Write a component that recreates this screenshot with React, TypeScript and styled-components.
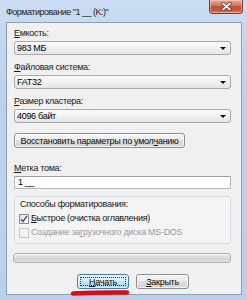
import React from "react";
import styled, { createGlobalStyle } from "styled-components";

const GlobalStyle = createGlobalStyle`
  html, body {
    margin: 0;
    padding: 0;
    background: #ffffff;
  }
  body {
    font-family: "Liberation Sans", Arial, sans-serif;
    font-size: 9px;
    letter-spacing: -0.3px;
    color: #000;
  }
`;

const Window = styled.div`
  width: 247px;
  height: 300px;
  box-sizing: border-box;
  padding: 0 5px 5px 6px;
  display: flex;
  flex-direction: column;
  background: linear-gradient(180deg, #c9dcf2 0%, #bcd2ec 30%, #b9d0eb 100%);
`;

const TitleBar = styled.div`
  height: 22px;
  flex: none;
  display: flex;
  justify-content: space-between;
  align-items: flex-start;
`;

const Title = styled.div`
  padding-top: 6px;
  line-height: 12px;
  font-size: 9px;
  letter-spacing: -0.5px;
  color: #1e1e1e;
`;

const CloseButton = styled.div`
  width: 34px;
  height: 14px;
  box-sizing: border-box;
  margin-right: -1px;
  border: 1px solid #7d3b30;
  border-top: none;
  border-radius: 0 0 4px 4px;
  background: linear-gradient(180deg, #e9a797 0%, #d67a66 40%, #c54d36 50%, #c9553c 80%, #df8a70 100%);
  box-shadow: inset 0 0 0 1px rgba(255, 220, 210, 0.45);
  display: flex;
  align-items: center;
  justify-content: center;
`;

const Client = styled.div`
  flex: 1;
  box-sizing: border-box;
  border: 1px solid #8ba1ba;
  background: #f0f0f0;
  padding: 0 10px 0 7px;
  display: flex;
  flex-direction: column;
`;

const Field = styled.div<{ $top: number }>`
  margin-top: ${(p) => p.$top}px;
  display: flex;
  flex-direction: column;
  gap: 2px;
`;

const Label = styled.div`
  line-height: 12px;
  color: #1a1a1a;
  white-space: nowrap;
`;

const Key = styled.span`
  text-decoration: underline;
  text-underline-offset: 1px;
`;

const Combo = styled.div`
  height: 14px;
  box-sizing: border-box;
  border: 1px solid #a8a8a8;
  border-radius: 3px;
  background: linear-gradient(180deg, #fcfcfc 0%, #f1f1f1 50%, #e4e4e4 100%);
  display: flex;
  align-items: center;
  justify-content: space-between;
  padding: 0 4px 0 2px;
  line-height: 12px;
`;

const Arrow = styled.span`
  width: 0;
  height: 0;
  border-left: 3px solid transparent;
  border-right: 3px solid transparent;
  border-top: 3px solid #111;
`;

const Button = styled.div<{ $width: number; $focused?: boolean }>`
  position: relative;
  width: ${(p) => p.$width}px;
  height: 15px;
  box-sizing: border-box;
  border: 1px solid ${(p) => (p.$focused ? "#3c7fb1" : "#8f8f8f")};
  border-radius: 3px;
  background: ${(p) =>
    p.$focused
      ? "linear-gradient(180deg, #eaf6fd 0%, #d9f0fc 50%, #bee6fd 50%, #a7d9f5 100%)"
      : "linear-gradient(180deg, #f4f4f4 0%, #ececec 50%, #dedede 50%, #d2d2d2 100%)"};
  box-shadow: inset 0 0 0 1px rgba(255, 255, 255, 0.7);
  display: flex;
  align-items: center;
  justify-content: center;
  line-height: 12px;
  white-space: nowrap;
  color: #111;
  ${(p) =>
    p.$focused &&
    `&::after {
      content: "";
      position: absolute;
      inset: 2px;
      border: 1px dotted #333;
    }`}
`;

const RestoreButton = styled(Button)`
  margin-top: 10px;
`;

const TextInput = styled.div`
  height: 13px;
  box-sizing: border-box;
  border: 1px solid #b4b7bd;
  border-top-color: #9a9ea6;
  background: #ffffff;
  padding: 0 3px;
  line-height: 11px;
  display: flex;
  align-items: center;
`;

const GroupBox = styled.div`
  margin-top: 7px;
  height: 48px;
  box-sizing: border-box;
  border: 1px solid #d5dbe0;
  border-radius: 3px;
  background: #f4f4f4;
  padding: 1px 4px 0 4px;
  display: flex;
  flex-direction: column;
  gap: 2px;
`;

const GroupTitle = styled(Label)`
  padding-left: 1px;
`;

const CheckRow = styled.div<{ $disabled?: boolean }>`
  display: flex;
  align-items: center;
  gap: 2px;
  line-height: 12px;
  color: ${(p) => (p.$disabled ? "#9a9a9a" : "#111")};
`;

const Box = styled.span<{ $disabled?: boolean }>`
  width: 10px;
  height: 10px;
  box-sizing: border-box;
  border: 1px solid ${(p) => (p.$disabled ? "#c6c6c6" : "#8f8f8f")};
  background: ${(p) =>
    p.$disabled ? "#f4f4f4" : "linear-gradient(135deg, #e4e4e4 0%, #fbfbfb 100%)"};
  display: flex;
  align-items: center;
  justify-content: center;
  margin-top: 1px;
`;

const Progress = styled.div`
  margin-top: 9px;
  height: 10px;
  margin-left: -1px;
  box-sizing: border-box;
  border: 1px solid #b1b1b1;
  border-radius: 3px;
  background: linear-gradient(180deg, #ececec 0%, #dcdcdc 45%, #d3d3d3 55%, #e2e2e2 100%);
  box-shadow: inset 0 1px 0 #f8f8f8;
`;

const ButtonRow = styled.div`
  margin-top: 11px;
  padding-left: 63px;
  display: flex;
  gap: 7px;
`;

const Marked = styled.div`
  position: relative;
`;

const RedStroke = styled.svg`
  position: absolute;
  left: -7px;
  top: 15px;
`;

export default function App() {
  return (
    <>
      <GlobalStyle />
      <Window>
        <TitleBar>
          <Title>Форматирование "1 __ (K:)"</Title>
          <CloseButton>
            <svg width="11" height="9" viewBox="0 0 11 9">
              <path d="M2 1.5 L9 7.5 M9 1.5 L2 7.5" stroke="#5a2a22" strokeWidth="3.2" strokeLinecap="round" />
              <path d="M2 1.5 L9 7.5 M9 1.5 L2 7.5" stroke="#ffffff" strokeWidth="1.8" strokeLinecap="round" />
            </svg>
          </CloseButton>
        </TitleBar>
        <Client>
          <Field $top={4}>
            <Label><Key>Е</Key>мкость:</Label>
            <Combo>983 МБ<Arrow /></Combo>
          </Field>
          <Field $top={6}>
            <Label><Key>Ф</Key>айловая система:</Label>
            <Combo>FAT32<Arrow /></Combo>
          </Field>
          <Field $top={6}>
            <Label><Key>Р</Key>азмер кластера:</Label>
            <Combo>4096 байт<Arrow /></Combo>
          </Field>
          <RestoreButton $width={171}>
            Восстановить параметры по умол<Key>ч</Key>анию
          </RestoreButton>
          <Field $top={14}>
            <Label><Key>М</Key>етка тома:</Label>
            <TextInput>1 __</TextInput>
          </Field>
          <GroupBox>
            <GroupTitle>Способы форматирования:</GroupTitle>
            <CheckRow>
              <Box>
                <svg width="8" height="8" viewBox="0 0 8 8">
                  <path d="M1 4.2 L3 6.5 L7 0.8" fill="none" stroke="#3d5590" strokeWidth="1.4" />
                </svg>
              </Box>
              <span><Key>Б</Key>ыстрое (очистка оглавления)</span>
            </CheckRow>
            <CheckRow $disabled>
              <Box $disabled />
              <span>Создание за<Key>г</Key>рузочного диска MS-DOS</span>
            </CheckRow>
          </GroupBox>
          <Progress />
          <ButtonRow>
            <Marked>
              <Button $width={52} $focused>
                <span><Key>Н</Key>ачать</span>
              </Button>
              <RedStroke width="60" height="8" viewBox="0 0 60 8">
                <path d="M3 4.5 Q30 3 57 3.5" fill="none" stroke="#e30613" strokeWidth="4.5" strokeLinecap="round" />
              </RedStroke>
            </Marked>
            <Button $width={53}>
              <span><Key>З</Key>акрыть</span>
            </Button>
          </ButtonRow>
        </Client>
      </Window>
    </>
  );
}
